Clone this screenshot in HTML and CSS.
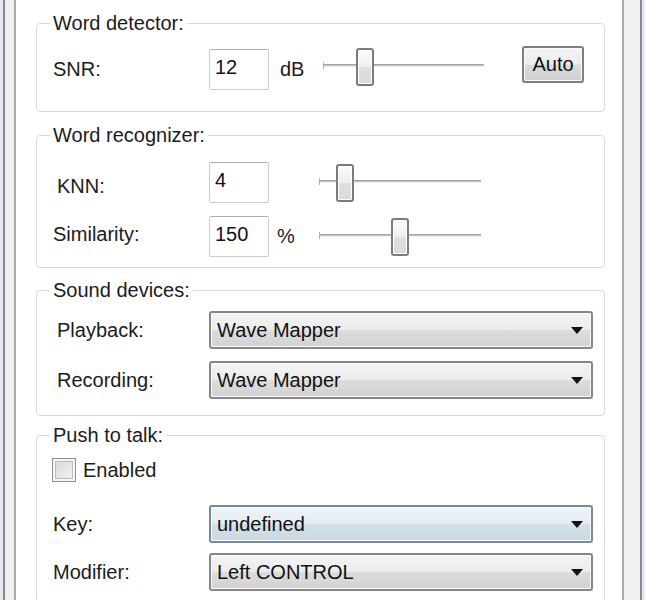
FILE: index.html
```html
<!DOCTYPE html>
<html lang="en">
    <head>
        <meta charset="UTF-8" />
        <title>Settings</title>
        <link rel="stylesheet" href="styles.css">
    </head>
    <body>
        <div class="window">
            <div class="panel">
                <fieldset class="group g-detector">
                    <legend>Word detector:</legend>
                    <div class="group-body">
                        <div class="row">
                            <span class="label">SNR:</span>
                            <input class="num" type="text" value="12" />
                            <span class="unit">dB</span>
                            <div class="slider raised" style="width: 161px">
                                <span class="thumb" style="left: 33px"></span>
                            </div>
                            <button class="btn" type="button">Auto</button>
                        </div>
                    </div>
                </fieldset>

                <fieldset class="group g-recognizer">
                    <legend>Word recognizer:</legend>
                    <div class="group-body">
                        <div class="row">
                            <span class="label indent low">KNN:</span>
                            <input class="num" type="text" value="4" />
                            <span class="unit"></span>
                            <div class="slider">
                                <span class="thumb" style="left: 17px"></span>
                            </div>
                        </div>
                        <div class="row">
                            <span class="label high">Similarity:</span>
                            <input class="num" type="text" value="150" />
                            <span class="unit">%</span>
                            <div class="slider">
                                <span class="thumb" style="left: 72px"></span>
                            </div>
                        </div>
                    </div>
                </fieldset>

                <fieldset class="group g-sound">
                    <legend>Sound devices:</legend>
                    <div class="group-body">
                        <div class="row">
                            <span class="label indent">Playback:</span>
                            <div class="combo">
                                <span>Wave Mapper</span>
                                <svg class="arrow" width="12" height="7" viewBox="0 0 12 7"><path d="M0 0H12L6 7Z" fill="#111"/></svg>
                            </div>
                        </div>
                        <div class="row">
                            <span class="label indent">Recording:</span>
                            <div class="combo">
                                <span>Wave Mapper</span>
                                <svg class="arrow" width="12" height="7" viewBox="0 0 12 7"><path d="M0 0H12L6 7Z" fill="#111"/></svg>
                            </div>
                        </div>
                    </div>
                </fieldset>

                <fieldset class="group g-talk">
                    <legend>Push to talk:</legend>
                    <div class="group-body">
                        <div class="row check-row">
                            <span class="check"></span>
                            <span class="check-label">Enabled</span>
                        </div>
                        <div class="row key-row">
                            <span class="label">Key:</span>
                            <div class="combo hot">
                                <span>undefined</span>
                                <svg class="arrow" width="12" height="7" viewBox="0 0 12 7"><path d="M0 0H12L6 7Z" fill="#111"/></svg>
                            </div>
                        </div>
                        <div class="row">
                            <span class="label">Modifier:</span>
                            <div class="combo">
                                <span>Left CONTROL</span>
                                <svg class="arrow" width="12" height="7" viewBox="0 0 12 7"><path d="M0 0H12L6 7Z" fill="#111"/></svg>
                            </div>
                        </div>
                    </div>
                </fieldset>
            </div>
        </div>
    </body>
</html>
```

FILE: styles.css
```css
body {
    margin: 0;
    background: #e4e9ef;
    font-family: "Liberation Sans", Arial, sans-serif;
    font-size: 20px;
    color: #1b1b1b;
}
.window {
    margin-left: 3px;
    width: 610px;
    min-height: 600px;
    padding: 0 16px 0 9px;
    border-left: 2px solid #858a92;
    border-right: 2px solid #858a92;
    background: #f0f0f0;
}
.panel {
    min-height: 600px;
    padding: 12px 17px 0 20px;
    border-left: 2px solid #a9a9a9;
    border-right: 2px solid #a9a9a9;
    background: #fff;
}

/* group boxes */
.group {
    margin: 0;
    padding: 0;
    min-width: 0;
    border: 1px solid #d6dbe0;
    border-radius: 4px;
}
.group legend {
    margin-left: 13px;
    padding: 0 3px;
    line-height: 22px;
}
.group-body {
    display: flex;
    flex-direction: column;
    padding-left: 16px;
}
.g-detector .group-body {
    padding-top: 15px;
    padding-bottom: 21px;
}
.g-recognizer {
    margin-top: 12px;
}
.g-recognizer .group-body {
    padding-top: 16px;
    padding-bottom: 10px;
    gap: 13px;
}
.g-sound {
    margin-top: 11px;
}
.g-sound .group-body {
    padding-top: 10px;
    padding-bottom: 16px;
    gap: 12px;
}
.g-talk {
    margin-top: 8px;
}
.g-talk .group-body {
    padding-top: 12px;
    padding-bottom: 10px;
    gap: 10px;
}
.g-talk .key-row {
    margin-top: 13px;
}

.row {
    display: flex;
    align-items: center;
}
.label {
    flex: none;
    width: 156px;
    box-sizing: border-box;
}
.label.indent {
    padding-left: 4px;
}
.label.low {
    margin-top: 7px;
}
.label.high {
    margin-bottom: 4px;
}

/* text boxes */
.num {
    flex: none;
    width: 60px;
    height: 41px;
    box-sizing: border-box;
    margin: 0;
    padding: 0 0 4px 5px;
    border: 1px solid #c9cdd1;
    border-top-color: #abafb4;
    border-radius: 2px;
    background: #fff;
    font: inherit;
    color: #111;
}
.unit {
    flex: none;
    width: 50px;
    box-sizing: border-box;
    padding-left: 8px;
}
.g-detector .unit {
    width: 54px;
    padding-left: 11px;
}

/* track bars */
.slider {
    position: relative;
    flex: none;
    width: 162px;
    height: 38px;
}
.slider::before {
    content: "";
    position: absolute;
    left: 0;
    right: 0;
    top: 16px;
    height: 3px;
    background: linear-gradient(#a3a3a3 0 1px, #c4c4c4 1px 2px, #ececec 2px);
}
.slider::after {
    content: "";
    position: absolute;
    left: 0;
    top: 14px;
    width: 1px;
    height: 7px;
    background: #b0b0b0;
}
.slider.raised {
    margin-top: -3px;
    margin-bottom: 2px;
}
.thumb {
    position: absolute;
    top: 0;
    z-index: 1;
    width: 18px;
    height: 38px;
    box-sizing: border-box;
    border: 2px solid #7a7a7a;
    border-radius: 3px;
    background: linear-gradient(#fbfbfb, #efefef 50%, #e0e0e0 50%, #d9d9d9);
    box-shadow: inset 0 0 0 1px #fff;
}

.btn {
    flex: none;
    margin: -5px 0 5px 38px;
    width: 62px;
    height: 37px;
    padding: 0;
    border: 2px solid #7e7e7e;
    border-radius: 3px;
    background: linear-gradient(#f4f4f4, #ececec 48%, #dcdcdc 52%, #cfcfcf);
    box-shadow: inset 0 0 0 1px #fbfbfb;
    font: inherit;
    color: #111;
}

/* drop-down lists */
.combo {
    flex: none;
    display: flex;
    align-items: center;
    justify-content: space-between;
    width: 384px;
    height: 38px;
    box-sizing: border-box;
    padding: 0 8px 0 6px;
    border: 2px solid #878787;
    border-radius: 3px;
    background: linear-gradient(#f4f4f4, #ececec 48%, #dcdcdc 52%, #d2d2d2);
    box-shadow: inset 0 0 0 1px #fafafa;
    color: #111;
}
.combo.hot {
    border-color: #7d8891;
    background: linear-gradient(#eef4f8, #e4edf3 48%, #d3e0e9 52%, #c9d8e2);
}
.arrow {
    flex: none;
}

/* check box */
.check-row {
    height: 24px;
}
.check {
    flex: none;
    margin-left: -1px;
    width: 24px;
    height: 24px;
    box-sizing: border-box;
    border: 1px solid #8e8f8f;
    background: linear-gradient(135deg, #d4d7db, #f4f4f4);
    box-shadow: inset 0 0 0 2px #f6f6f6, inset 0 0 0 3px #b9bcc0;
}
.check-label {
    margin-left: 7px;
}
```
